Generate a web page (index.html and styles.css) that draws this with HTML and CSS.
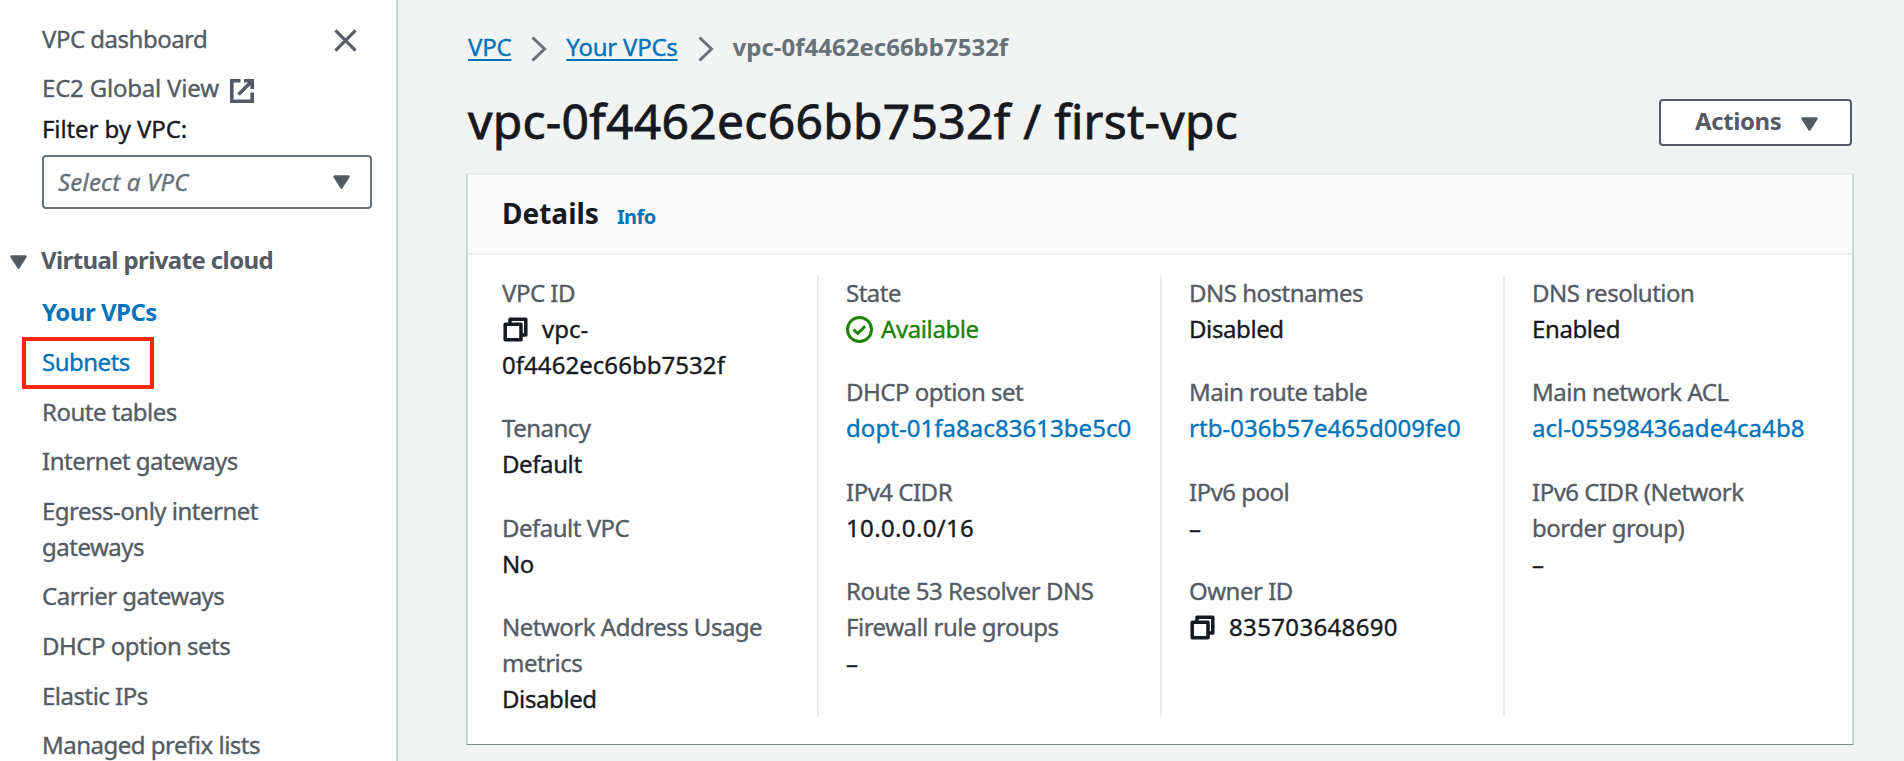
FILE: index.html
```html
<!DOCTYPE html>
<html lang="en">
<head>
<meta charset="utf-8">
<title>vpc-0f4462ec66bb7532f / first-vpc</title>
<link rel="stylesheet" href="styles.css">
</head>
<body>
<svg width="0" height="0" class="defs">
  <symbol id="caret" viewBox="0 0 17 14"><path d="M1.5 1.5h14L8.5 12.5Z" fill="currentColor" stroke="currentColor" stroke-width="2.4" stroke-linejoin="round"/></symbol>
  <symbol id="copy" viewBox="0 0 25 25"><path d="M7 6.5V2.2H22.8V18H18M2.2 7.2H18V22.8H2.2Z" fill="none" stroke="currentColor" stroke-width="3.5" stroke-linejoin="round"/></symbol>
  <symbol id="chevron" viewBox="0 0 16 26"><path d="M1.5 1.5L13.5 13L1.5 24.5" fill="none" stroke="currentColor" stroke-width="3"/></symbol>
</svg>
<div class="layout">
  <nav class="sidebar">
    <div class="side-head">
      <a class="side-link">VPC dashboard</a>
      <svg class="close" viewBox="0 0 24 24"><path d="M1.5 1.5l21 21M22.5 1.5l-21 21" fill="none" stroke="currentColor" stroke-width="3.2"/></svg>
    </div>
    <a class="side-link external">EC2 Global View
      <svg class="ext-icon" viewBox="0 0 24 24"><path d="M10.5 1.8H1.8V22.2H22.2V13.5M14 1.8H22.2V10M21.5 2.5L8.5 15.5" fill="none" stroke="currentColor" stroke-width="3.6"/></svg>
    </a>
    <div class="filter-label">Filter by VPC:</div>
    <div class="select"><span class="placeholder">Select a VPC</span><svg class="caret"><use href="#caret"/></svg></div>
    <div class="section"><svg class="caret"><use href="#caret"/></svg><span>Virtual private cloud</span></div>
    <div class="links">
      <a class="side-link current">Your VPCs</a>
      <a class="side-link visited marked">Subnets</a>
      <a class="side-link">Route tables</a>
      <a class="side-link">Internet gateways</a>
      <a class="side-link">Egress-only internet gateways</a>
      <a class="side-link">Carrier gateways</a>
      <a class="side-link">DHCP option sets</a>
      <a class="side-link">Elastic IPs</a>
      <a class="side-link">Managed prefix lists</a>
    </div>
  </nav>
  <main class="main">
    <div class="crumbs">
      <a class="crumb">VPC</a>
      <svg class="chevron"><use href="#chevron"/></svg>
      <a class="crumb">Your VPCs</a>
      <svg class="chevron"><use href="#chevron"/></svg>
      <span class="crumb-current">vpc-0f4462ec66bb7532f</span>
    </div>
    <header class="title-row">
      <h1 class="title">vpc-0f4462ec66bb7532f / first-vpc</h1>
      <div class="actions">Actions<svg class="caret"><use href="#caret"/></svg></div>
    </header>
    <section class="card">
      <div class="card-head"><h2 class="card-title">Details</h2><a class="info">Info</a></div>
      <div class="columns">
        <div class="column">
          <div><div class="label">VPC ID</div><div class="value id"><svg class="copy"><use href="#copy"/></svg>vpc-<br>0f4462ec66bb7532f</div></div>
          <div><div class="label">Tenancy</div><div class="value">Default</div></div>
          <div><div class="label">Default VPC</div><div class="value">No</div></div>
          <div><div class="label">Network Address Usage metrics</div><div class="value">Disabled</div></div>
        </div>
        <div class="column">
          <div><div class="label">State</div><div class="value status"><svg class="check" viewBox="0 0 27 27"><circle cx="13.5" cy="13.5" r="12" fill="none" stroke="currentColor" stroke-width="3"/><path d="M7.5 13.5l4.3 4L19 10.3" fill="none" stroke="currentColor" stroke-width="3"/></svg>Available</div></div>
          <div><div class="label">DHCP option set</div><div class="value id link">dopt-01fa8ac83613be5c0</div></div>
          <div><div class="label">IPv4 CIDR</div><div class="value id num">10.0.0.0/16</div></div>
          <div><div class="label">Route 53 Resolver DNS Firewall rule groups</div><div class="value">–</div></div>
        </div>
        <div class="column">
          <div><div class="label">DNS hostnames</div><div class="value">Disabled</div></div>
          <div><div class="label">Main route table</div><div class="value id link">rtb-036b57e465d009fe0</div></div>
          <div><div class="label">IPv6 pool</div><div class="value">–</div></div>
          <div><div class="label">Owner ID</div><div class="value id num"><svg class="copy"><use href="#copy"/></svg>835703648690</div></div>
        </div>
        <div class="column">
          <div><div class="label">DNS resolution</div><div class="value">Enabled</div></div>
          <div><div class="label">Main network ACL</div><div class="value id link">acl-05598436ade4ca4b8</div></div>
          <div><div class="label">IPv6 CIDR (Network border group)</div><div class="value">–</div></div>
        </div>
      </div>
    </section>
  </main>
</div>
</body>
</html>
```
FILE: styles.css
```css
*, *::after { box-sizing: border-box; }
body {
  margin: 0;
  font: 24px/36px "Noto Sans", "Open Sans", sans-serif;
  letter-spacing: -0.5px;
  -webkit-text-stroke: 0.35px currentColor;
  color: #16191f;
  background: #f2f3f3;
}
.defs { position: absolute; }
.layout { display: flex; height: 761px; overflow: hidden; }

.sidebar {
  flex: none;
  width: 398px;
  padding: 21px 24px 0 42px;
  background: #fff;
  border-right: 2px solid #d0d6d6;
  color: #545b64;
}
.side-head { display: flex; justify-content: space-between; padding-right: 15px; }
.close { width: 23px; height: 23px; margin-top: 8px; }
.side-link { display: block; }
.external { display: flex; gap: 11px; margin-top: 13px; letter-spacing: -0.2px; }
.ext-icon { width: 24px; height: 24px; margin-top: 9px; }
.filter-label { margin-top: 5px; color: #16191f; letter-spacing: -0.1px; }
.select {
  display: flex;
  align-items: center;
  justify-content: space-between;
  width: 330px;
  height: 54px;
  margin-top: 8px;
  padding: 0 20px 0 14px;
  border: 2px solid #687078;
  border-radius: 4px;
}
.placeholder { font-style: italic; color: #687078; letter-spacing: 0.2px; }
.caret { width: 17px; height: 14px; }
.section {
  display: flex;
  align-items: center;
  gap: 14px;
  margin: 33px 0 0 -32px;
  font-weight: 700;
  letter-spacing: -0.6px;
  -webkit-text-stroke: 0;
}
.section .caret { margin-top: 4px; }
.links { display: flex; flex-direction: column; gap: 13.6px; width: 260px; margin-top: 16.4px; }
.current { font-weight: 700; color: #0073bb; -webkit-text-stroke: 0; }
.visited { color: #0073bb; }
.marked { position: relative; }
.marked::after {
  content: "";
  position: absolute;
  left: -20px;
  top: -7px;
  width: 132px;
  height: 52px;
  border: 4px solid #ff2600;
}

.main { flex: 1; min-width: 0; padding: 29px 50px 0 68px; }
.crumbs { display: flex; align-items: center; letter-spacing: -0.25px; padding-left: 2px; }
.crumb { color: #0073bb; text-decoration: underline; text-decoration-thickness: 2px; text-underline-offset: 3px; }
.chevron { width: 16px; height: 26px; margin: 4px 19px 0 20px; color: #687078; }
.crumb-current { font-weight: 700; color: #687078; letter-spacing: 0; -webkit-text-stroke: 0; }
.title-row { display: flex; justify-content: space-between; margin-top: 25px; padding: 0 2px; }
.title { margin: 0; padding-top: 1px; font-size: 48px; line-height: 59px; font-weight: 400; letter-spacing: 0.28px; -webkit-text-stroke-width: 0.8px; }
.actions {
  display: flex;
  align-items: center;
  gap: 20px;
  width: 193px;
  height: 47px;
  margin-top: 9px;
  padding: 0 0 3px 34px;
  background: #fff;
  border: 2px solid #545b64;
  border-radius: 4px;
  color: #545b64;
  font-weight: 700;
  letter-spacing: -0.4px;
  -webkit-text-stroke: 0;
}
.actions .caret { margin-top: 5px; }

.card {
  height: 572px;
  margin-top: 23px;
  background: #fff;
  border-style: solid;
  border-width: 2px 2px 1px;
  border-color: #eaeded #d0d6d6 #7c8c8c;
}
.card-head {
  display: flex;
  align-items: baseline;
  gap: 18px;
  height: 80px;
  padding: 20px 34px 0;
  background: #fafafa;
  border-bottom: 2px solid #eaeded;
  -webkit-text-stroke: 0;
}
.card-title { margin: 0; font-size: 28px; line-height: 36px; letter-spacing: 0; }
.info { font-size: 20px; font-weight: 700; color: #0073bb; letter-spacing: -0.6px; }
.columns { display: grid; grid-template-columns: 349px 343px 343px 1fr; margin-top: 20px; height: 442px; }
.column { display: flex; flex-direction: column; gap: 27.3px; min-width: 0; padding: 0 26px 0 27px; border-left: 2px solid #eaeded; }
.column:first-child { padding-left: 34px; border-left: 0; }
.column:last-child { padding-right: 46px; }
.label { color: #545b64; }
.value { letter-spacing: -0.4px; }
.id { letter-spacing: 0.05px; white-space: nowrap; }
.num { letter-spacing: 0.35px; }
.link { color: #0073bb; }
.copy { width: 25px; height: 25px; margin: 0 14px 0 1px; vertical-align: -4px; }
.status { display: flex; align-items: center; gap: 8px; color: #1d8102; }
.check { width: 27px; height: 27px; margin-top: 1px; }
```
